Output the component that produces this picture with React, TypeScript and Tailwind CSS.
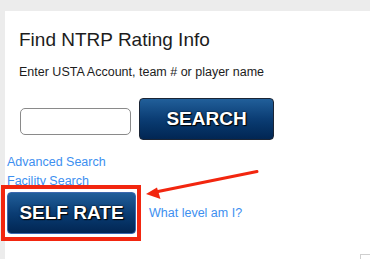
import React from "react";

const btn =
  "flex items-center justify-center rounded-[4px] bg-linear-to-b from-[#215f9a] via-[#0b3d74] to-[#022653] text-[19px] font-bold text-white [text-shadow:1px_1px_1px_#000,0_0_2px_#000]";

export default function App() {
  return (
    <div className="relative h-[259px] w-[370px] overflow-hidden bg-[#ececec] pl-[5px] pt-[11px] font-['Liberation_Sans',Arial,sans-serif]">
      <div className="flex h-full flex-col bg-white">
        <div className="pl-[14px] pt-[18px]">
          <h1 className="text-[19px] leading-[22px] text-[#1c1c1c]">Find NTRP Rating Info</h1>
          <p className="mt-[14px] text-[12.5px] leading-[15px] text-[#1c1c1c]">
            Enter USTA Account, team # or player name
          </p>
          <div className="mt-[18px] flex items-end gap-[8px]">
            <input
              type="text"
              className="mb-[5px] ml-[1px] h-[27px] w-[111px] rounded-[5px] border border-[#8a8a8a] bg-white outline-none"
            />
            <button className={`${btn} h-[42px] w-[135px] border border-[#1b2535]`}>SEARCH</button>
          </div>
        </div>

        <div className="mt-[13px] pl-[2px] text-[12.5px] leading-[19px] text-[#3d8ff0]">
          <a className="block w-fit">Advanced Search</a>
          <a className="block w-fit">Facility Search</a>
        </div>

        <div className="mt-[1px] flex items-center gap-[13px] pl-[2px]">
          <div className="relative">
            <button className={`${btn} h-[42px] w-[129px] border border-[#3b69b0]`}>SELF RATE</button>
            {/* annotation frame */}
            <div className="pointer-events-none absolute -left-[6px] -top-[7px] h-[56px] w-[140px] border-[4px] border-[#f2260f]" />
          </div>
          <a className="text-[12.5px] leading-[15px] text-[#3d8ff0]">What level am I?</a>
        </div>
      </div>

      {/* annotation arrow */}
      <svg className="pointer-events-none absolute left-0 top-0" width="370" height="259">
        <line x1="257" y1="171.5" x2="158" y2="191.5" stroke="#f2260f" strokeWidth="3" strokeLinecap="round" />
        <polygon points="146,194 157,187.5 160.5,199" fill="#f2260f" />
      </svg>

      <div className="absolute left-[360px] top-[254px] h-[10px] w-[12px] border-l border-t border-[#cfcfcf]" />
    </div>
  );
}
